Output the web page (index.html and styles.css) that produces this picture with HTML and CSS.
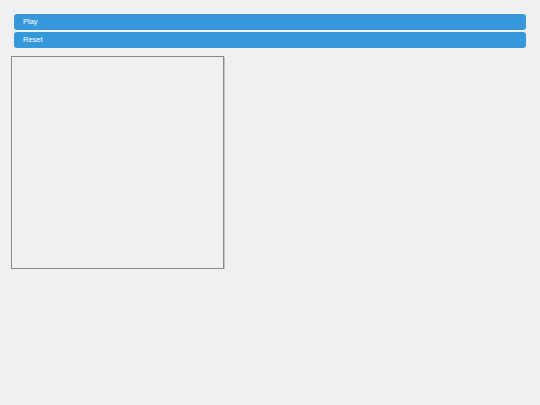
FILE: index.html
```html
<!DOCTYPE html>
<html>
<head>
<meta charset="utf-8">
<link rel="stylesheet" href="styles.css">
</head>
<body>
<div class="controls">
  <button class="btn">Play</button>
  <button class="btn">Reset</button>
</div>
<div class="stage">
  <div class="canvas"></div>
</div>
</body>
</html>
```
FILE: styles.css
```css
html, body {
  margin: 0;
  padding: 0;
  background: #f0f0f0;
  font-family: "Liberation Sans", Arial, sans-serif;
}
.controls {
  display: flex;
  flex-direction: column;
  gap: 2px;
  padding: 14px 14px 0 14px;
}
.btn {
  display: block;
  height: 16px;
  margin: 0;
  padding: 0 0 2px 9px;
  border: none;
  border-radius: 3px;
  background: #3498db;
  color: #ffffff;
  font-family: "Liberation Sans", Arial, sans-serif;
  font-size: 7.5px;
  text-align: left;
}
.stage {
  padding: 8px 0 0 11px;
}
.canvas {
  width: 211px;
  height: 211px;
  border: 1px solid #8a8a8a;
  box-shadow: 1px 1px 0 #c4c4c4;
}
```
